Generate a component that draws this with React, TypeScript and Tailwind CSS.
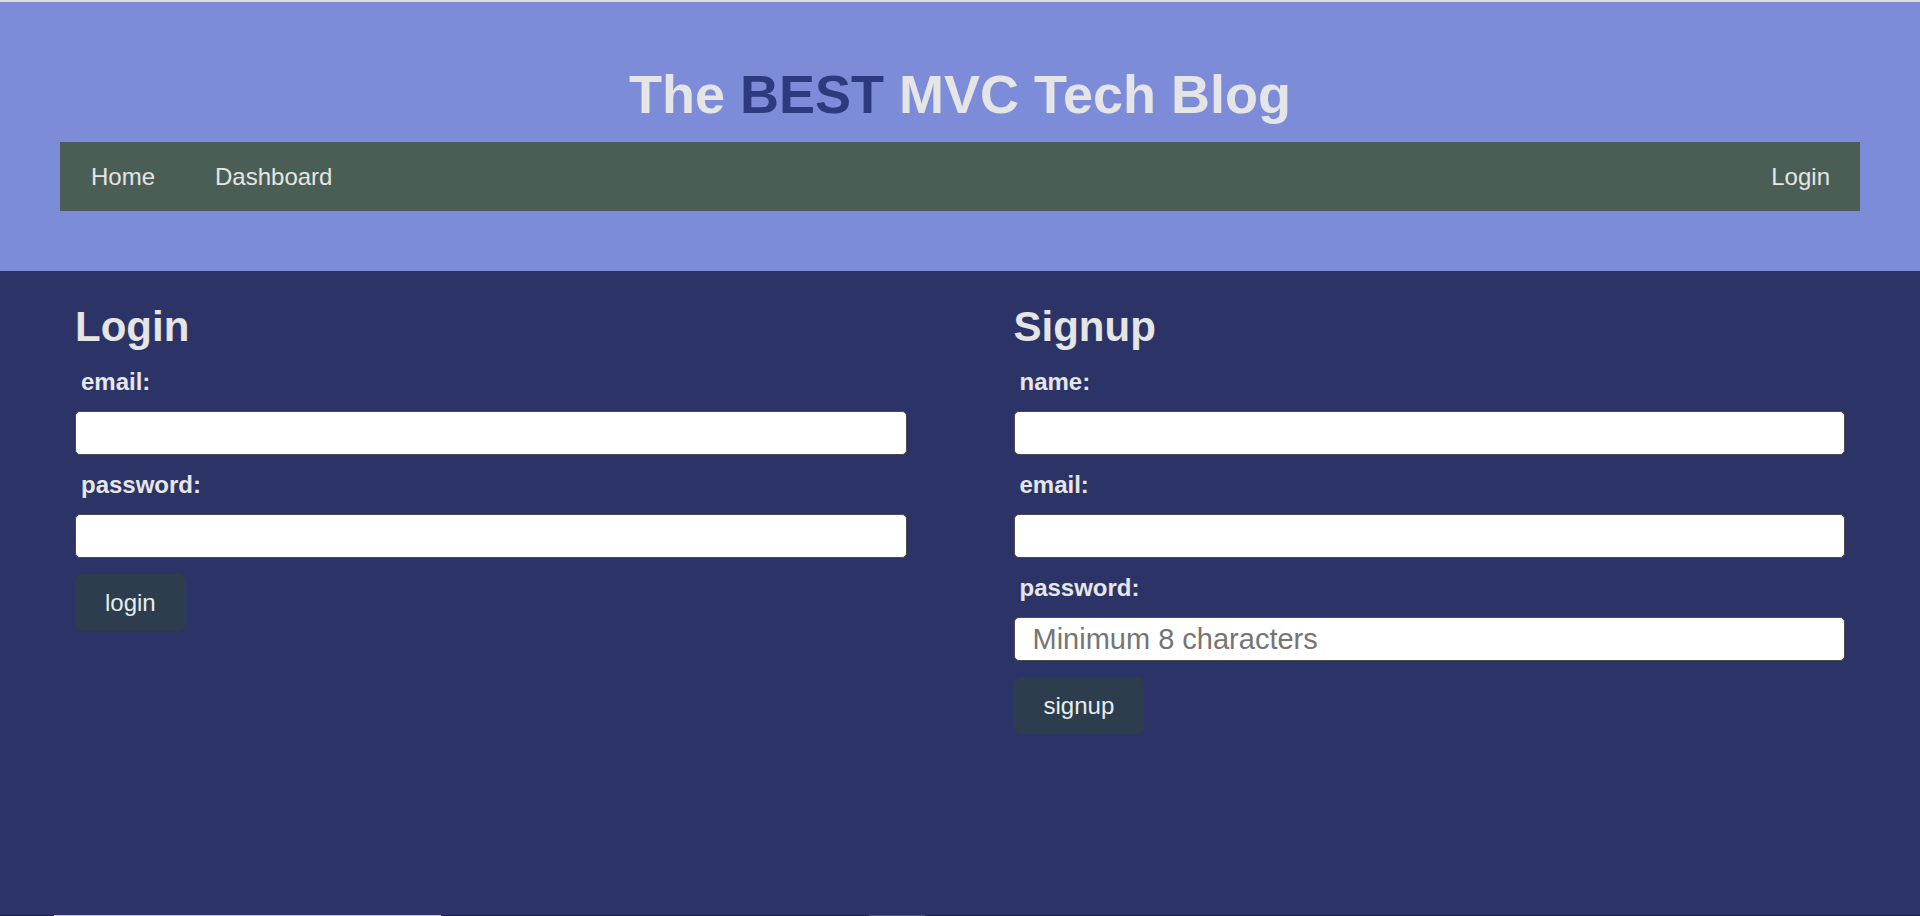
import React from 'react';

const font = { fontFamily: '"Liberation Sans", Arial, sans-serif' };

const Field: React.FC<{ label: string; type?: string; placeholder?: string; first?: boolean }> = ({
  label,
  type = 'text',
  placeholder,
  first,
}) => (
  <>
    <label className={`block pl-[6px] text-[24px] leading-none font-bold text-[#e6e6e6] ${first ? 'mt-[22px]' : 'mt-[18px]'}`}>
      {label}
    </label>
    <input
      type={type}
      placeholder={placeholder}
      className="mt-[17px] block h-[44px] w-full rounded-[5px] border border-[#4a4a4a] bg-white px-[18px] text-[29px] text-[#222] placeholder:text-[#757575] outline-none"
    />
  </>
);

const Button: React.FC<{ children: React.ReactNode }> = ({ children }) => (
  <button className="mt-[16px] rounded-[8px] bg-[#2e3d4e] px-[30px] py-[15px] text-[24px] leading-[27px] text-[#e6eef0]">
    {children}
  </button>
);

export default function App() {
  return (
    <div className="flex h-screen flex-col bg-[#2b3367]" style={font}>
      <div className="h-[2px] bg-[#dcdcdc]" />

      {/* Header */}
      <header className="bg-[#7d8cd9] px-[60px] pt-[65px] pb-[60px]">
        <h1 className="text-center text-[54px] leading-none font-bold text-[#e5e5e5] mb-[21px]">
          The <span className="text-[#2c3a80]">BEST</span> MVC Tech Blog
        </h1>
        <nav className="flex h-[69px] items-center bg-[#4b5e55] text-[24px] text-[#e5e5e5]">
          <a className="px-[30px] pl-[31px]">Home</a>
          <a className="px-[30px]">Dashboard</a>
          <a className="ml-auto px-[30px]">Login</a>
        </nav>
      </header>

      {/* Forms */}
      <main className="grid flex-1 grid-cols-2 items-start gap-[107px] px-[75px] pt-[35px]">
        <section className="flex flex-col items-start">
          <h2 className="text-[42px] leading-none font-bold text-[#e5e5e5]">Login</h2>
          <div className="w-full">
            <Field label="email:" type="email" first />
            <Field label="password:" type="password" />
          </div>
          <Button>login</Button>
        </section>

        <section className="flex flex-col items-start">
          <h2 className="text-[42px] leading-none font-bold text-[#e5e5e5]">Signup</h2>
          <div className="w-full">
            <Field label="name:" first />
            <Field label="email:" type="email" />
            <Field label="password:" type="password" placeholder="Minimum 8 characters" />
          </div>
          <Button>signup</Button>
        </section>
      </main>

      <div className="flex h-[1px] bg-[#202644]">
        <div className="ml-[54px] w-[387px] bg-[#c6c6d6]" />
        <div className="ml-[428px] w-[56px] bg-[#4d5470]" />
      </div>
    </div>
  );
}
